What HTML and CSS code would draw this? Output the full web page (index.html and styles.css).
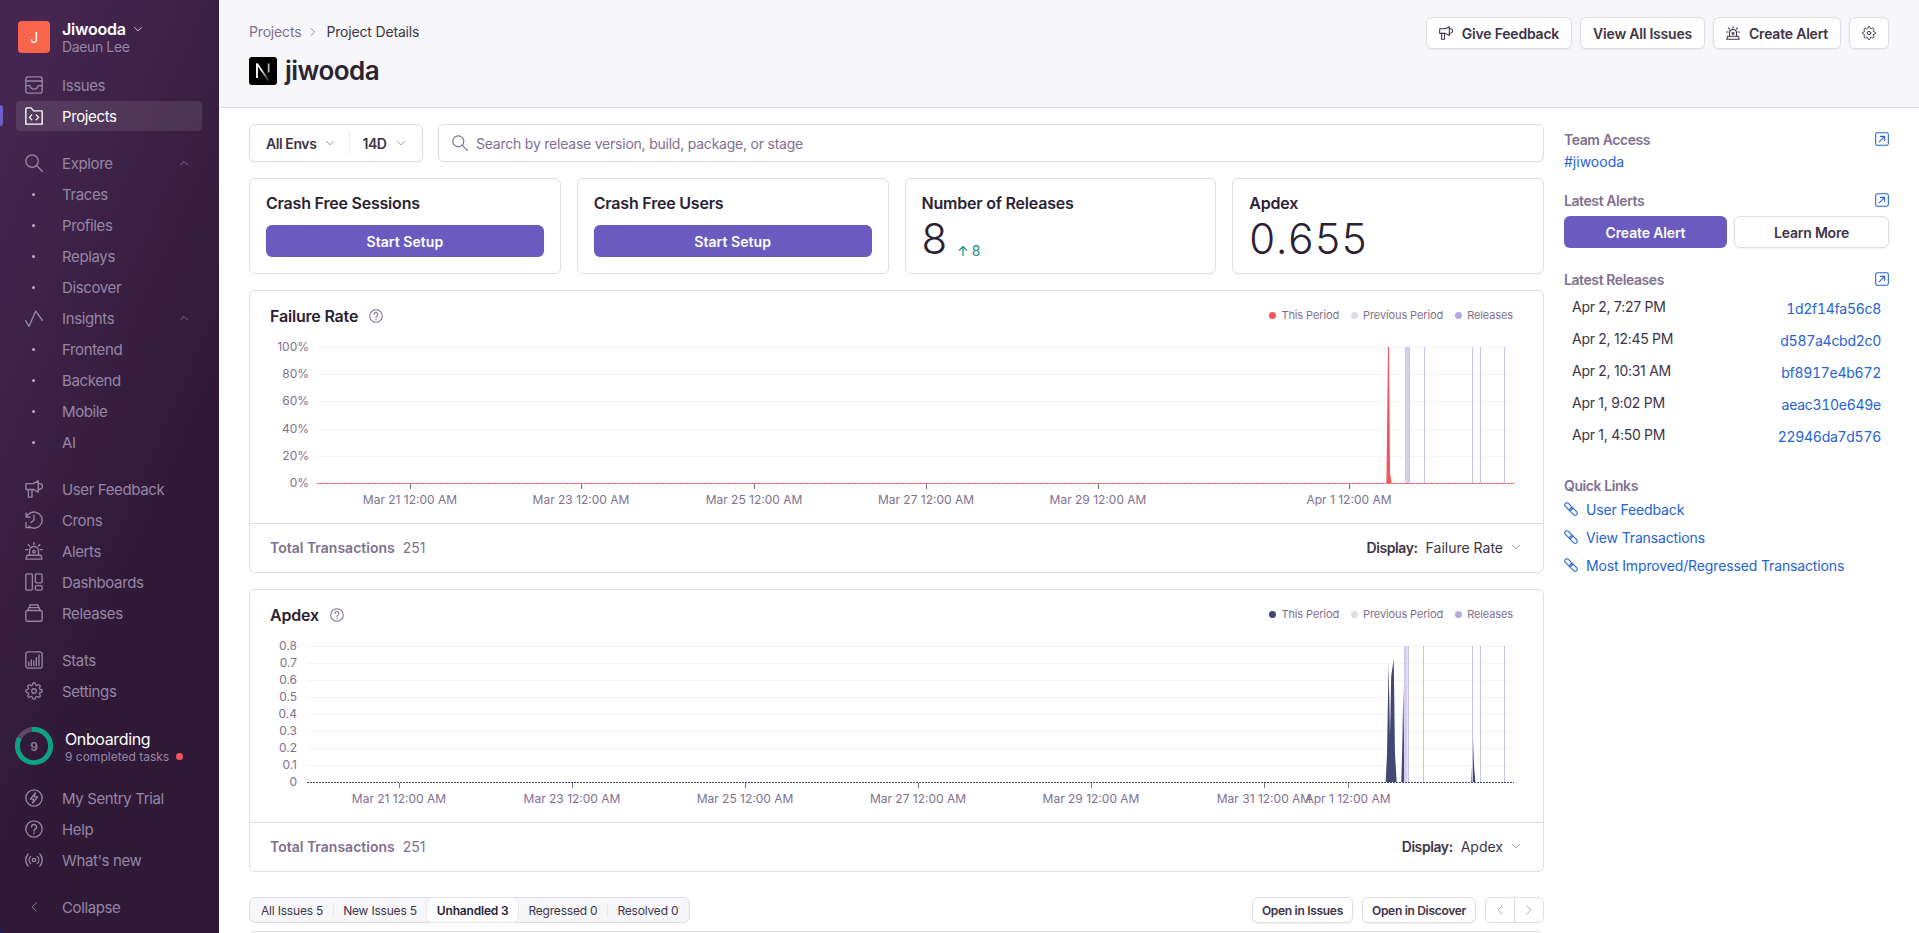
FILE: index.html
```html
<!DOCTYPE html>
<html lang="en">
<head>
<meta charset="utf-8">
<title>jiwooda - Project Details</title>
<link rel="stylesheet" href="styles.css">
</head>
<body>
<svg class="defs" aria-hidden="true">
  <symbol id="i-issues" viewBox="0 0 16 16"><rect x=".75" y=".75" width="14.5" height="14.5" rx="2"/><path d="M.75 4.4h14.5M.75 8.6h3.6c.3 2 1.7 3 3.65 3s3.35-1 3.65-3h3.6"/></symbol>
  <symbol id="i-projects" viewBox="0 0 16 16"><path d="M.75 2.1C.75 1.3 1.3.75 2 .75h3.4L7.7 3.4h6.9c.4 0 .65.3.65.7v11.15H.75z"/><path d="M6 7 3.9 9.2 6 11.4M10 7l2.1 2.2-2.1 2.2"/></symbol>
  <symbol id="i-search" viewBox="0 0 16 16"><circle cx="6.3" cy="6.3" r="5.5"/><path d="M10.3 10.3l5.2 5.2"/></symbol>
  <symbol id="i-insights" viewBox="0 0 16 16"><path d="M.6 10.4l3 5 6-13.6 5.8 8.2"/></symbol>
  <symbol id="i-megaphone" viewBox="0 0 16 16"><path d="M.8 3.2h6.4L11.8.8v10L7.2 8.4H.8z"/><path d="M3 8.4v6.8h3.2V8.4"/><path d="M11.8 3.2h1.2a2.5 2.5 0 0 1 0 5h-1.2"/></symbol>
  <symbol id="i-crons" viewBox="0 0 16 16"><path d="M1.4 5.2A7.2 7.2 0 1 1 8 15.3c-1.7 0-3.3-.6-4.6-1.7"/><path d="M8 3.8V8L5.2 10.2"/><path d="M1 1.6v3.8h3.8"/><path d="M.9 10.2v4.6h4"/></symbol>
  <symbol id="i-siren" viewBox="0 0 16 16"><path d="M.8 15.2h14.4l-1-3.4H1.8z"/><path d="M4 11.8V8a4 4 0 0 1 8 0v3.8"/><circle cx="8" cy="8.6" r="1.1"/><path d="M8 .5v2M2.8 2.2l1.4 1.5M13.2 2.2l-1.4 1.5M.6 6.8h1.8M13.6 6.8h1.8"/></symbol>
  <symbol id="i-dash" viewBox="0 0 16 16"><rect x=".75" y=".75" width="5.8" height="14.5" rx="1"/><rect x="9.2" y=".75" width="6" height="8" rx="1"/><rect x="9.2" y="11.2" width="6" height="4" rx="1"/></symbol>
  <symbol id="i-releases" viewBox="0 0 16 16"><rect x=".75" y="5.8" width="14.5" height="9.5" rx="1.4"/><path d="M2.6 5.8l.7-2.6h9.4l.7 2.6M4 3.2l.4-2.4h7.2l.4 2.4"/></symbol>
  <symbol id="i-stats" viewBox="0 0 16 16"><rect x=".75" y=".75" width="14.5" height="14.5" rx="2"/><path d="M3.4 13v-3M5.6 13V8M7.8 13V8.8M10 13V6M12.4 13V3.4"/></symbol>
  <symbol id="i-gear" viewBox="0 0 24 24"><circle cx="12" cy="12" r="3"/><path d="M19.4 15a1.65 1.65 0 0 0 .33 1.82l.06.06a2 2 0 0 1 0 2.83 2 2 0 0 1-2.83 0l-.06-.06a1.65 1.65 0 0 0-1.82-.33 1.65 1.65 0 0 0-1 1.51V21a2 2 0 0 1-2 2 2 2 0 0 1-2-2v-.09A1.65 1.65 0 0 0 9 19.4a1.65 1.65 0 0 0-1.82.33l-.06.06a2 2 0 0 1-2.83 0 2 2 0 0 1 0-2.83l.06-.06a1.65 1.65 0 0 0 .33-1.82 1.65 1.65 0 0 0-1.51-1H3a2 2 0 0 1-2-2 2 2 0 0 1 2-2h.09A1.65 1.65 0 0 0 4.6 9a1.65 1.65 0 0 0-.33-1.82l-.06-.06a2 2 0 0 1 0-2.83 2 2 0 0 1 2.83 0l.06.06a1.65 1.65 0 0 0 1.82.33H9a1.65 1.65 0 0 0 1-1.51V3a2 2 0 0 1 2-2 2 2 0 0 1 2 2v.09a1.65 1.65 0 0 0 1 1.51 1.65 1.65 0 0 0 1.82-.33l.06-.06a2 2 0 0 1 2.83 0 2 2 0 0 1 0 2.83l-.06.06a1.65 1.65 0 0 0-.33 1.82V9a1.65 1.65 0 0 0 1.51 1H21a2 2 0 0 1 2 2 2 2 0 0 1-2 2h-.09a1.65 1.65 0 0 0-1.51 1z"/></symbol>
  <symbol id="i-bolt" viewBox="0 0 16 16"><circle cx="8" cy="8" r="7.25"/><path d="M9.2 3.4 4.8 9h3l-1 3.6L11.2 7h-3z"/></symbol>
  <symbol id="i-help" viewBox="0 0 16 16"><circle cx="8" cy="8" r="7.25"/><path d="M5.8 6.2a2.2 2.2 0 1 1 3.3 1.9c-.8.5-1.1.9-1.1 1.7M8 11.4v.8"/></symbol>
  <symbol id="i-broadcast" viewBox="0 0 16 16"><circle cx="8" cy="8" r="1.5"/><path d="M5 4.8a4.6 4.6 0 0 0 0 6.4M11 4.8a4.6 4.6 0 0 1 0 6.4M2.8 2.6a8 8 0 0 0 0 10.8M13.2 2.6a8 8 0 0 1 0 10.8"/></symbol>
  <symbol id="i-down" viewBox="0 0 16 16"><path d="M2.5 5.5 8 11l5.5-5.5"/></symbol>
  <symbol id="i-up" viewBox="0 0 16 16"><path d="M2.5 11 8 5.5l5.5 5.5"/></symbol>
  <symbol id="i-left" viewBox="0 0 16 16"><path d="M11 2.5 5.5 8l5.5 5.5"/></symbol>
  <symbol id="i-right" viewBox="0 0 16 16"><path d="M5 2.5 10.5 8 5 13.5"/></symbol>
  <symbol id="i-open" viewBox="0 0 16 16"><rect x=".75" y=".75" width="14.5" height="14.5" rx="2"/><path d="M4.8 11.2 11 5M6.2 5H11v4.8"/></symbol>
  <symbol id="i-link" viewBox="0 0 16 16"><g transform="rotate(45 8 8)"><rect x="-1" y="5.6" width="10" height="4.8" rx="2.4"/><rect x="7" y="5.6" width="10" height="4.8" rx="2.4"/></g></symbol>
</svg>

<div class="app">
  <aside class="sidebar">
    <div class="org">
      <div class="org-avatar">J</div>
      <div class="org-text">
        <div class="org-name">Jiwooda <svg class="org-chev"><use href="#i-down"/></svg></div>
        <div class="org-user">Daeun Lee</div>
      </div>
    </div>

    <nav class="nav-group nav-first">
      <a class="nav-item"><svg class="nav-icon"><use href="#i-issues"/></svg>Issues</a>
      <a class="nav-item nav-active"><svg class="nav-icon"><use href="#i-projects"/></svg>Projects</a>
    </nav>

    <nav class="nav-group">
      <a class="nav-item"><svg class="nav-icon"><use href="#i-search"/></svg>Explore<svg class="nav-caret"><use href="#i-up"/></svg></a>
      <a class="nav-item"><span class="nav-dot"></span>Traces</a>
      <a class="nav-item"><span class="nav-dot"></span>Profiles</a>
      <a class="nav-item"><span class="nav-dot"></span>Replays</a>
      <a class="nav-item"><span class="nav-dot"></span>Discover</a>
      <a class="nav-item"><svg class="nav-icon"><use href="#i-insights"/></svg>Insights<svg class="nav-caret"><use href="#i-up"/></svg></a>
      <a class="nav-item"><span class="nav-dot"></span>Frontend</a>
      <a class="nav-item"><span class="nav-dot"></span>Backend</a>
      <a class="nav-item"><span class="nav-dot"></span>Mobile</a>
      <a class="nav-item"><span class="nav-dot"></span>AI</a>
    </nav>

    <nav class="nav-group">
      <a class="nav-item"><svg class="nav-icon"><use href="#i-megaphone"/></svg>User Feedback</a>
      <a class="nav-item"><svg class="nav-icon"><use href="#i-crons"/></svg>Crons</a>
      <a class="nav-item"><svg class="nav-icon"><use href="#i-siren"/></svg>Alerts</a>
      <a class="nav-item"><svg class="nav-icon"><use href="#i-dash"/></svg>Dashboards</a>
      <a class="nav-item"><svg class="nav-icon"><use href="#i-releases"/></svg>Releases</a>
    </nav>

    <nav class="nav-group">
      <a class="nav-item"><svg class="nav-icon"><use href="#i-stats"/></svg>Stats</a>
      <a class="nav-item"><svg class="nav-icon"><use href="#i-gear"/></svg>Settings</a>
    </nav>

    <div class="onboarding">
      <svg class="ring" viewBox="0 0 38 38">
        <circle class="ring-track" cx="19" cy="19" r="16.6"/>
        <circle class="ring-value" cx="19" cy="19" r="16.6"/>
        <text class="ring-text" x="19" y="23.5" text-anchor="middle">9</text>
      </svg>
      <div class="onb-text">
        <div class="onb-title">Onboarding</div>
        <div class="onb-sub">9 completed tasks <span class="onb-dot"></span></div>
      </div>
    </div>

    <nav class="nav-group nav-trial">
      <a class="nav-item"><svg class="nav-icon"><use href="#i-bolt"/></svg>My Sentry Trial</a>
      <a class="nav-item"><svg class="nav-icon"><use href="#i-help"/></svg>Help</a>
      <a class="nav-item"><svg class="nav-icon"><use href="#i-broadcast"/></svg>What's new</a>
    </nav>

    <nav class="nav-group">
      <a class="nav-item"><svg class="nav-collapse"><use href="#i-left"/></svg>Collapse</a>
    </nav>
  </aside>

  <div class="page">
    <header class="page-header">
      <div>
        <div class="crumbs"><span class="crumb-link">Projects</span><svg class="crumb-sep"><use href="#i-right"/></svg><span>Project Details</span></div>
        <div class="title-row">
          <svg class="logo" viewBox="0 0 28 28">
            <defs><linearGradient id="nfade" x1="0" y1="0" x2="1" y2="1"><stop offset=".35" stop-color="#fff"/><stop offset="1" stop-color="#000"/></linearGradient></defs>
            <rect width="28" height="28" rx="3" fill="#000"/>
            <path d="M7 6.5h2l12.2 17.8h-2.3z" fill="url(#nfade)"/>
            <rect x="7" y="6.5" width="1.9" height="14.5" fill="#fff"/>
            <rect x="18.8" y="6.5" width="1.7" height="9" fill="#bbb"/>
          </svg>
          <h1 class="title">jiwooda</h1>
        </div>
      </div>
      <div class="actions">
        <button class="btn"><svg class="btn-icon"><use href="#i-megaphone"/></svg>Give Feedback</button>
        <button class="btn">View All Issues</button>
        <button class="btn"><svg class="btn-icon"><use href="#i-siren"/></svg>Create Alert</button>
        <button class="btn btn-square"><svg class="btn-icon"><use href="#i-gear"/></svg></button>
      </div>
    </header>

    <main class="body">
      <div class="main-col">
        <div class="filters">
          <div class="filter-group">
            <div class="filter filter-env">All Envs <svg class="chev"><use href="#i-down"/></svg></div>
            <div class="filter filter-time">14D <svg class="chev"><use href="#i-down"/></svg></div>
          </div>
          <div class="search"><svg class="search-icon"><use href="#i-search"/></svg>Search by release version, build, package, or stage</div>
        </div>

        <div class="score-cards">
          <div class="card"><div class="card-title">Crash Free Sessions</div><button class="btn-primary btn-full">Start Setup</button></div>
          <div class="card"><div class="card-title">Crash Free Users</div><button class="btn-primary btn-full">Start Setup</button></div>
          <div class="card"><div class="card-title">Number of Releases</div><div class="score"><span class="score-num">8</span><span class="score-trend"><svg class="trend-arrow" viewBox="0 0 12 12"><path d="M6 11V1.5M2 5.5l4-4 4 4"/></svg>8</span></div></div>
          <div class="card"><div class="card-title">Apdex</div><div class="score"><span class="score-num">0.655</span></div></div>
        </div>

        <section class="chart-card">
          <div class="chart-head">
            <div class="chart-title">Failure Rate <svg class="chart-help"><use href="#i-help"/></svg></div>
            <div class="legend">
              <span class="legend-item"><i class="dot dot-red"></i>This Period</span>
              <span class="legend-item"><i class="dot dot-grey"></i>Previous Period</span>
              <span class="legend-item"><i class="dot dot-purple"></i>Releases</span>
            </div>
          </div>
          <svg class="chart-svg" viewBox="0 0 1293 186">
            <g class="grid"><path d="M67 10.5H1264M67 37.5H1264M67 64.5H1264M67 92.5H1264M67 119.5H1264"/></g>
            <g class="ylabels" text-anchor="end">
              <text x="59" y="14">100%</text><text x="59" y="41">80%</text><text x="59" y="68">60%</text><text x="59" y="96">40%</text><text x="59" y="123">20%</text><text x="59" y="150">0%</text>
            </g>
            <g class="releases"><rect class="rel-bar" x="1155" y="10" width="4" height="136"/><path d="M1159.5 10v136M1174.5 10v136M1222.5 10v136M1230.5 10v136M1254.5 10v136"/></g>
            <path class="spike-red" d="M1136.4 146 L1137.2 80 L1138 10 L1139 10 L1139.6 80 L1140 136 L1141.6 146Z"/>
            <path class="base-grey" d="M67 146.5H1264"/>
            <path class="base-red" d="M67 146.5H1264"/>
            <g class="ticks"><path d="M160.5 147v5M331.5 147v5M504.5 147v5M676.5 147v5M848.5 147v5M1099.5 147v5"/></g>
            <g class="xlabels" text-anchor="middle">
              <text x="160" y="167">Mar 21 12:00 AM</text><text x="331" y="167">Mar 23 12:00 AM</text><text x="504" y="167">Mar 25 12:00 AM</text><text x="676" y="167">Mar 27 12:00 AM</text><text x="848" y="167">Mar 29 12:00 AM</text><text x="1099" y="167">Apr 1 12:00 AM</text>
            </g>
          </svg>
          <div class="chart-foot">
            <div class="foot-left"><span class="foot-label">Total Transactions</span><span class="foot-value">251</span></div>
            <div class="foot-right"><span class="foot-key">Display:</span><span>Failure Rate</span><svg class="chev"><use href="#i-down"/></svg></div>
          </div>
        </section>

        <section class="chart-card">
          <div class="chart-head">
            <div class="chart-title">Apdex <svg class="chart-help"><use href="#i-help"/></svg></div>
            <div class="legend">
              <span class="legend-item"><i class="dot dot-navy"></i>This Period</span>
              <span class="legend-item"><i class="dot dot-grey"></i>Previous Period</span>
              <span class="legend-item"><i class="dot dot-purple"></i>Releases</span>
            </div>
          </div>
          <svg class="chart-svg" viewBox="0 0 1293 186">
            <g class="grid"><path d="M57 10.5H1264M57 27.5H1264M57 44.5H1264M57 61.5H1264M57 78.5H1264M57 95.5H1264M57 112.5H1264M57 129.5H1264"/></g>
            <g class="ylabels" text-anchor="end">
              <text x="47" y="14">0.8</text><text x="47" y="31">0.7</text><text x="47" y="48">0.6</text><text x="47" y="65">0.5</text><text x="47" y="82">0.4</text><text x="47" y="99">0.3</text><text x="47" y="116">0.2</text><text x="47" y="133">0.1</text><text x="47" y="150">0</text>
            </g>
            <path class="spike-navy" d="M1135.7 146 L1137 118 L1138.6 27 L1140 100 L1141.2 40 L1143.7 23 L1145 118 L1146.7 146Z"/>
            <path class="spike-navy" d="M1151.3 146 L1152.3 110 L1153.3 51 L1154.2 120 L1155.7 146Z"/>
            <path class="spike-navy" d="M1221.3 146 L1222.2 125 L1223 103 L1224 130 L1225.3 146Z"/>
            <g class="releases"><rect class="rel-bar" x="1154" y="10" width="3.5" height="136"/><path d="M1158.5 10v136M1173.5 10v136M1222.5 10v136M1230.5 10v136M1254.5 10v136"/></g>
            <path class="base-navy" d="M57 146.5H1264"/>
            <g class="ticks"><path d="M149.5 147v5M322.5 147v5M495.5 147v5M668.5 147v5M841.5 147v5M1014.5 147v5M1098.5 147v5"/></g>
            <g class="xlabels" text-anchor="middle">
              <text x="149" y="167">Mar 21 12:00 AM</text><text x="322" y="167">Mar 23 12:00 AM</text><text x="495" y="167">Mar 25 12:00 AM</text><text x="668" y="167">Mar 27 12:00 AM</text><text x="841" y="167">Mar 29 12:00 AM</text><text x="1014" y="167">Mar 31 12:00 AM</text><text x="1098" y="167">Apr 1 12:00 AM</text>
            </g>
          </svg>
          <div class="chart-foot">
            <div class="foot-left"><span class="foot-label">Total Transactions</span><span class="foot-value">251</span></div>
            <div class="foot-right"><span class="foot-key">Display:</span><span>Apdex</span><svg class="chev"><use href="#i-down"/></svg></div>
          </div>
        </section>

        <div class="issues-bar">
          <div class="segments">
            <span class="seg">All Issues 5</span><span class="seg seg-line">New Issues 5</span><span class="seg seg-on">Unhandled 3</span><span class="seg">Regressed 0</span><span class="seg seg-line">Resolved 0</span>
          </div>
          <div class="issues-actions">
            <button class="btn btn-sm">Open in Issues</button>
            <button class="btn btn-sm">Open in Discover</button>
            <div class="pager"><span class="pager-btn"><svg class="pager-icon"><use href="#i-left"/></svg></span><span class="pager-btn pager-next"><svg class="pager-icon"><use href="#i-right"/></svg></span></div>
          </div>
        </div>
        <div class="issues-table"></div>
      </div>

      <aside class="side-col">
        <div class="side-head side-first"><span>Team Access</span><svg class="open-icon"><use href="#i-open"/></svg></div>
        <a class="link team-link">#jiwooda</a>

        <div class="side-head side-alerts"><span>Latest Alerts</span><svg class="open-icon"><use href="#i-open"/></svg></div>
        <div class="alert-btns">
          <button class="btn-primary alert-create">Create Alert</button>
          <button class="btn alert-learn">Learn More</button>
        </div>

        <div class="side-head side-releases"><span>Latest Releases</span><svg class="open-icon"><use href="#i-open"/></svg></div>
        <ul class="release-list">
          <li class="release"><span>Apr 2, 7:27 PM</span><a class="link release-hash">1d2f14fa56c8</a></li>
          <li class="release"><span>Apr 2, 12:45 PM</span><a class="link release-hash">d587a4cbd2c0</a></li>
          <li class="release"><span>Apr 2, 10:31 AM</span><a class="link release-hash">bf8917e4b672</a></li>
          <li class="release"><span>Apr 1, 9:02 PM</span><a class="link release-hash">aeac310e649e</a></li>
          <li class="release"><span>Apr 1, 4:50 PM</span><a class="link release-hash">22946da7d576</a></li>
        </ul>

        <div class="side-head side-quick"><span>Quick Links</span></div>
        <ul class="quick-list">
          <li><a class="link quick"><svg class="quick-icon"><use href="#i-link"/></svg>User Feedback</a></li>
          <li><a class="link quick"><svg class="quick-icon"><use href="#i-link"/></svg>View Transactions</a></li>
          <li><a class="link quick"><svg class="quick-icon"><use href="#i-link"/></svg>Most Improved/Regressed Transactions</a></li>
        </ul>
      </aside>
    </main>
  </div>
</div>
</body>
</html>
```

FILE: styles.css
```css
* { box-sizing: border-box; }
html, body { margin: 0; height: 100%; overflow: hidden; }
body {
  font-family: "Inter", "Liberation Sans", sans-serif;
  font-size: 14px;
  letter-spacing: -0.012em;
  color: #3e3446;
  background: #fff;
}
.defs { position: absolute; width: 0; height: 0; }
symbol { fill: none; stroke: currentColor; stroke-width: 1.2; stroke-linecap: round; stroke-linejoin: round; }
#i-gear { stroke-width: 1.7; }
ul { list-style: none; margin: 0; padding: 0; }
button { font: inherit; letter-spacing: inherit; cursor: pointer; }
.app { display: flex; height: 933px; background: #241a7a; }

/* Sidebar */
.sidebar {
  width: 219px;
  flex: none;
  padding: 21px 17px 0 16px;
  color: #9586a5;
  background: linear-gradient(294.17deg, #2f1937 35.57%, #452650 92.42%);
  border-bottom-left-radius: 6px;
  font-size: 15px;
  letter-spacing: -0.025em;
}
.org { display: flex; gap: 12px; padding-left: 2px; height: 49px; }
.org-avatar {
  width: 32px; height: 32px; border-radius: 4px;
  background: #f9654c; color: #fff;
  display: flex; align-items: center; justify-content: center;
  font-size: 14px;
}
.org-name { display: flex; align-items: center; gap: 7px; color: #fff; font-size: 16px; font-weight: 600; line-height: 16px; letter-spacing: -0.015em; }
.org-chev { width: 10px; height: 10px; stroke-width: 2; color: #fff; }
.org-user { margin-top: 1px; font-size: 14px; line-height: 17px; }
.nav-group { display: flex; flex-direction: column; gap: 1px; margin-top: 17px; }
.nav-first { margin-top: 0; }
.nav-item { position: relative; display: flex; align-items: center; height: 30px; padding-left: 9px; border-radius: 4px; }
.nav-active { color: #fff; background: rgba(255, 255, 255, .1); }
.nav-active::before {
  content: ""; position: absolute; left: -16px; top: 4px;
  width: 3px; height: 21px; border-radius: 0 3px 3px 0; background: #6c5fc7;
}
.nav-icon { width: 18px; height: 18px; margin-right: 19px; flex: none; }
.nav-dot { width: 3px; height: 3px; margin: 0 27px 0 7px; border-radius: 50%; background: #b7acc3; flex: none; }
.nav-caret { width: 10px; height: 10px; position: absolute; left: 163px; top: 10px; }
.nav-collapse { width: 12px; height: 12px; margin: 0 22px 0 3px; flex: none; stroke-width: 1.6; }
.onboarding { display: flex; align-items: center; gap: 12px; margin: 21px 0 0 -1px; height: 38px; }
.ring { width: 38px; height: 38px; flex: none; }
.ring-track, .ring-value { fill: none; stroke-width: 4.8; }
.ring-track { stroke: #5d4a68; }
.ring-value { stroke: #0aa283; stroke-dasharray: 88 105; transform: rotate(-97deg); transform-origin: 19px 19px; }
.ring-text { fill: #8c7d9a; font-size: 12px; font-weight: 600; }
.onb-text { padding-top: 1px; }
.onb-title { color: #fff; font-size: 16px; line-height: 18px; }
.onb-sub { display: flex; align-items: center; gap: 7px; font-size: 12px; line-height: 15px; margin-top: 1px; letter-spacing: 0; }
.onb-dot { width: 7px; height: 7px; border-radius: 50%; background: #f55459; }
.nav-trial { margin-top: 18px; }

/* Page */
.page { flex: 1; min-width: 0; background: #fff; }
.page-header {
  display: flex; justify-content: space-between;
  height: 108px; padding: 17px 30px 0;
  background: #f7f7f9;
  border-bottom: 1px solid #e0dce5;
}
.crumbs { display: flex; align-items: center; height: 29px; color: #3e3446; }
.crumb-link { color: #80708f; }
.crumb-sep { width: 10px; height: 10px; margin: 0 8px 0 7px; color: #80708f; }
.title-row { display: flex; align-items: center; gap: 8px; margin-top: 11px; }
.logo { width: 28px; height: 28px; }
.title { margin: 0; font-size: 26px; font-weight: 600; line-height: 28px; color: #2b2233; letter-spacing: -0.02em; }
.actions { display: flex; gap: 8px; height: 32px; }
.btn {
  display: inline-flex; align-items: center; justify-content: center; gap: 9px;
  height: 32px; padding: 0 12px;
  border: 1px solid #e0dce5; border-radius: 6px;
  background: #fff; color: #3e3446;
  font-weight: 600;
  letter-spacing: -0.015em;
  box-shadow: 0 1px 2px rgba(43, 34, 51, .06);
}
.btn-square { width: 40px; padding: 0; }
.btn-icon { width: 14px; height: 14px; flex: none; }
.body { display: grid; grid-template-columns: 1295px 325px; gap: 20px; padding: 16px 30px 0; }

/* Filters */
.filters { display: flex; gap: 15px; height: 38px; }
.filter-group { display: flex; align-items: center; width: 174px; height: 38px; border: 1px solid #e0dce5; border-radius: 6px; box-shadow: 0 1px 2px rgba(43, 34, 51, .04); letter-spacing: -0.03em; }
.filter { display: flex; align-items: center; height: 24px; font-weight: 600; gap: 9px; }
.filter-env { padding: 0 14px 0 16px; border-right: 1px solid #eeebf1; }
.filter-time { padding-left: 12px; }
.chev { width: 10px; height: 10px; color: #80708f; flex: none; }
.search { flex: 1; display: flex; align-items: center; height: 38px; padding-left: 13px; border: 1px solid #e0dce5; border-radius: 6px; color: #80708f; box-shadow: 0 1px 2px rgba(43, 34, 51, .04); letter-spacing: -0.016em; }
.search-icon { width: 16px; height: 16px; margin-right: 8px; }

/* Score cards */
.score-cards { display: grid; grid-template-columns: repeat(4, 1fr); gap: 16px; margin-top: 16px; }
.card { height: 96px; padding: 14px 16px; border: 1px solid #e0dce5; border-radius: 6px; }
.card-title { font-size: 16px; font-weight: 600; line-height: 20px; color: #2b2233; letter-spacing: -0.013em; }
.btn-primary {
  height: 32px; border: 0; border-radius: 6px;
  background: #6b5bc1; color: #fff; font-weight: 600; letter-spacing: -0.01em;
}
.btn-full { width: 100%; margin-top: 12px; letter-spacing: 0.005em; }
.score { display: flex; align-items: flex-end; gap: 8px; margin-top: 2px; }
.score-num { font-size: 42px; line-height: 48px; font-weight: 350; color: #2b2233; letter-spacing: 0.04em; }
.score-trend { display: flex; align-items: center; gap: 3px; margin-bottom: 4px; font-size: 14px; color: #1c8f74; }
.trend-arrow { width: 12px; height: 12px; fill: none; stroke: #1c8f74; stroke-width: 1.2; }

/* Charts */
.chart-card { display: flex; flex-direction: column; height: 283px; margin-top: 16px; border: 1px solid #e0dce5; border-radius: 6px; overflow: hidden; }
.chart-head { display: flex; justify-content: space-between; align-items: flex-start; height: 46px; padding: 15px 30px 0 20px; flex: none; }
.chart-title { display: flex; align-items: center; gap: 11px; font-size: 16px; font-weight: 600; line-height: 20px; color: #2b2233; letter-spacing: -0.012em; }
.chart-help { width: 14px; height: 14px; color: #80708f; stroke-width: 1; }
.legend { display: flex; gap: 12px; margin-top: 1px; font-size: 11px; line-height: 16px; color: #80708f; letter-spacing: -0.01em; }
.legend-item { display: flex; align-items: center; gap: 5px; }
.dot { width: 7px; height: 7px; border-radius: 50%; }
.dot-red { background: #f55459; }
.dot-grey { background: #e0dce5; }
.dot-purple { background: #b4aae2; }
.dot-navy { background: #444674; }
.chart-svg { display: block; width: 1293px; height: 186px; flex: none; font-family: "Inter", "Liberation Sans", sans-serif; }
.grid path { stroke: #f5f4f7; fill: none; }
.ylabels text, .xlabels text { font-size: 12px; fill: #80708f; letter-spacing: 0; }
.ticks path { stroke: #80708f; fill: none; }
.releases path { stroke: #c9c2e8; fill: none; }
.rel-bar { fill: #d4cff0; }
.spike-red { fill: #f55459; }
.spike-navy { fill: #444674; }
.base-grey { stroke: #c9c3d0; fill: none; }
.base-red { stroke: #f55459; stroke-dasharray: 2 1; fill: none; }
.base-navy { stroke: #444674; stroke-dasharray: 2 1; fill: none; }
.chart-foot { display: flex; justify-content: space-between; align-items: center; height: 49px; padding: 0 22px 2px 20px; border-top: 1px solid #e0dce5; flex: none; letter-spacing: 0; }
.foot-left { display: flex; gap: 8px; color: #80708f; }
.foot-label { font-weight: 600; }
.foot-right { display: flex; align-items: center; gap: 8px; color: #3e3446; }
.foot-key { font-weight: 600; letter-spacing: -0.03em; }

/* Issues bar */
.issues-bar { display: flex; justify-content: space-between; height: 26px; margin-top: 25px; }
.segments { display: flex; align-items: center; height: 26px; padding: 0 1px; border: 1px solid #e0dce5; border-radius: 6px; background: #f7f7f9; font-size: 12px; color: #3e3446; letter-spacing: -0.016em; }
.seg { position: relative; display: flex; align-items: center; height: 24px; padding: 0 10px; }
.seg-line::before { content: ""; position: absolute; left: 0; top: 5px; width: 1px; height: 14px; background: #e9e6ec; }
.seg-on { background: #fff; border-radius: 5px; font-weight: 600; color: #2b2233; box-shadow: 0 0 0 1px #e9e6ec; }
.issues-actions { display: flex; gap: 9px; }
.btn-sm { height: 26px; padding: 0 9px; font-size: 12px; letter-spacing: -0.025em; }
.pager { display: flex; width: 59px; height: 26px; border: 1px solid #e0dce5; border-radius: 6px; }
.pager-btn { flex: 1; display: flex; align-items: center; justify-content: center; color: #a89eb3; }
.pager-next { border-left: 1px solid #e0dce5; }
.pager-icon { width: 12px; height: 12px; }
.issues-table { height: 60px; margin-top: 8px; border: 1px solid #e0dce5; border-radius: 6px 6px 0 0; }

/* Side column */
.side-col { padding-top: 5px; }
.side-head { display: flex; justify-content: space-between; align-items: center; height: 20px; font-weight: 600; color: #80708f; letter-spacing: -0.03em; }
.side-alerts { margin-top: 18px; }
.side-releases { margin-top: 21px; }
.side-quick { margin-top: 24px; }
.open-icon { width: 14px; height: 14px; color: #2562d4; stroke-width: 1.5; }
.link { color: #2562d4; }
.team-link { display: block; margin-top: 3px; line-height: 20px; letter-spacing: 0; }
.alert-btns { display: grid; grid-template-columns: 163px 155px; gap: 7px; margin-top: 6px; }
.alert-create, .alert-learn { width: 100%; }
.release-list { margin-top: 2px; }
.release { display: flex; justify-content: space-between; height: 32px; padding: 6px 8px 0; line-height: 20px; letter-spacing: -0.02em; }
.release-hash { margin-top: 2px; letter-spacing: -0.02em; font-variant-numeric: tabular-nums; }
.quick-list { margin-top: 0; }
.quick-list li { height: 28px; display: flex; align-items: center; }
.quick { display: flex; align-items: center; gap: 8px; letter-spacing: -0.01em; }
.quick-icon { width: 14px; height: 14px; stroke-width: 1.1; }
```
